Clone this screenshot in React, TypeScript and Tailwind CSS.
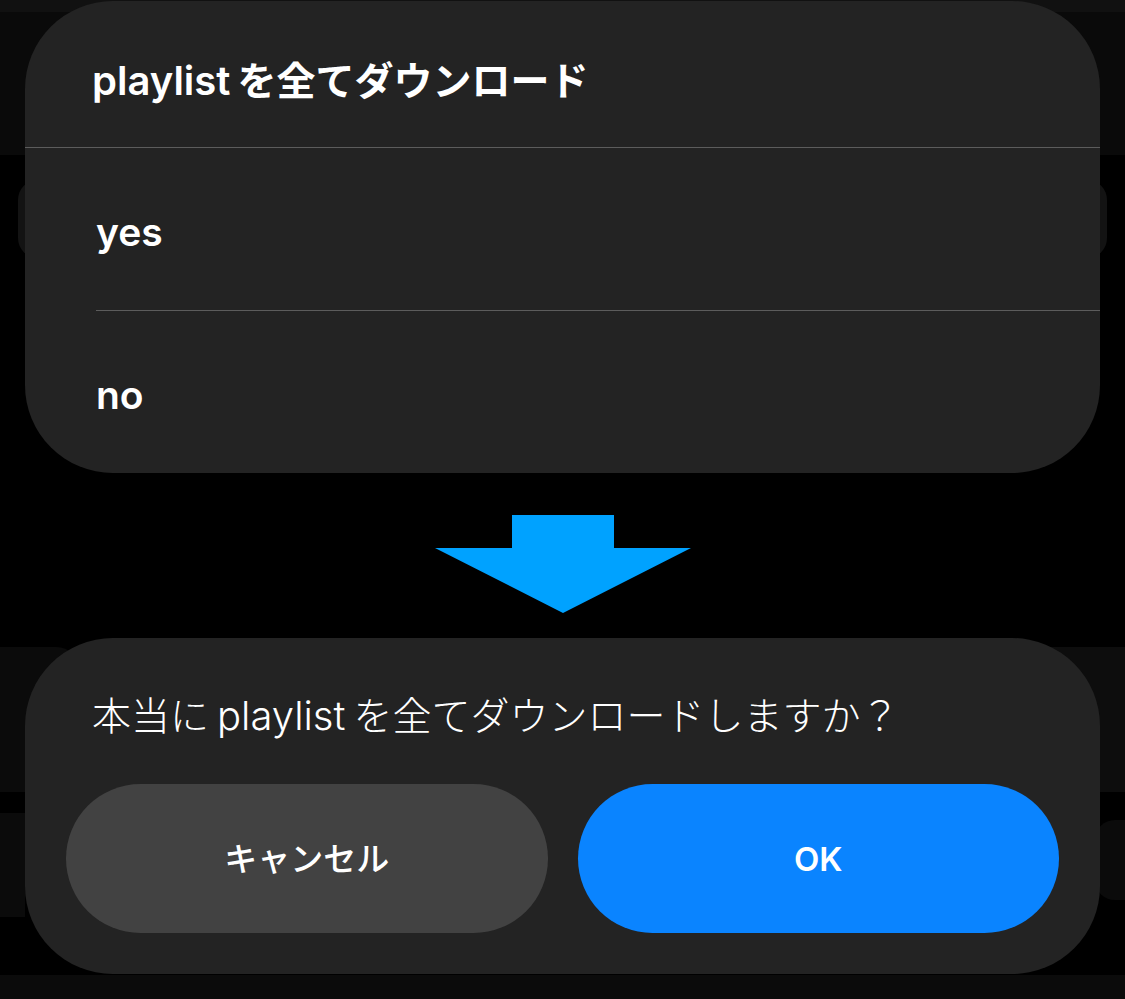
import type { ReactNode } from "react";

const font = { fontFamily: '"Inter", "Noto Sans CJK JP", sans-serif' };

function OptionRow({ label, divider }: { label: string; divider?: boolean }) {
  return (
    <div className="flex flex-col pl-[71px]">
      <div className="flex h-[162px] items-center pt-[6px] text-[39px] font-semibold text-white">{label}</div>
      {divider && <div className="h-px bg-[#5c5c5c]" />}
    </div>
  );
}

function PillButton({ className, children }: { className: string; children: ReactNode }) {
  return (
    <button
      className={
        "flex h-[149px] flex-1 items-center justify-center rounded-full pt-[2px] text-[33px] text-white " +
        className
      }
    >
      {children}
    </button>
  );
}

function DownArrow() {
  return (
    <svg width="256" height="98" viewBox="0 0 256 98">
      <polygon points="77,0 179,0 179,33 256,33 128,98 0,33 77,33" fill="#00a2ff" />
    </svg>
  );
}

export default function App() {
  return (
    <div className="relative h-[999px] w-[1125px] overflow-hidden bg-black" style={font}>
      {/* faded app behind the sheets */}
      <div className="absolute inset-x-0 top-0 h-[12px] bg-[#111111]" />
      <div className="absolute inset-x-0 top-[12px] h-[143px] bg-[#0a0a0a]" />
      <div className="absolute left-[18px] right-[18px] top-[180px] h-[78px] rounded-[20px] bg-[#131313]" />
      <div className="absolute left-0 top-[647px] h-[145px] w-[80px] rounded-tr-[24px] bg-[#0b0b0b]" />
      <div className="absolute left-0 top-[813px] h-[104px] w-[25px] bg-[#0b0b0b]" />
      <div className="absolute right-0 top-[647px] h-[145px] w-[90px] bg-[#0d0d0d]" />
      <div className="absolute right-0 top-[820px] h-[80px] w-[30px] rounded-l-[20px] bg-[#0b0b0b]" />
      <div className="absolute inset-x-0 bottom-0 h-[24px] bg-[#0b0b0b]" />

      <div className="relative flex flex-col px-[25px] pt-px">
        <div className="flex flex-col rounded-[88px] bg-[#232323]">
          <div className="flex h-[146px] items-center pl-[67px] pt-[14px] text-[40px] font-semibold text-white">
            playlist<span className="ml-[7px] text-[39px]">を全てダウンロード</span>
          </div>
          <div className="h-px bg-[#5c5c5c]" />
          <OptionRow label="yes" divider />
          <OptionRow label="no" />
        </div>

        <div className="flex h-[165px] items-start justify-center pt-[42px]">
          <DownArrow />
        </div>

        <div className="flex flex-col rounded-[88px] bg-[#232323] px-[41px] pb-[41px]">
          <div className="flex h-[146px] items-center pl-[26px] pt-[10px] text-[39px] font-light text-white">
            本当に<span className="mx-[8px] text-[40px]">playlist</span>を全てダウンロードしますか？
          </div>
          <div className="flex gap-[30px]">
            <PillButton className="bg-[#424242] font-medium">キャンセル</PillButton>
            <PillButton className="bg-[#0a84ff] font-semibold">OK</PillButton>
          </div>
        </div>
      </div>
    </div>
  );
}
